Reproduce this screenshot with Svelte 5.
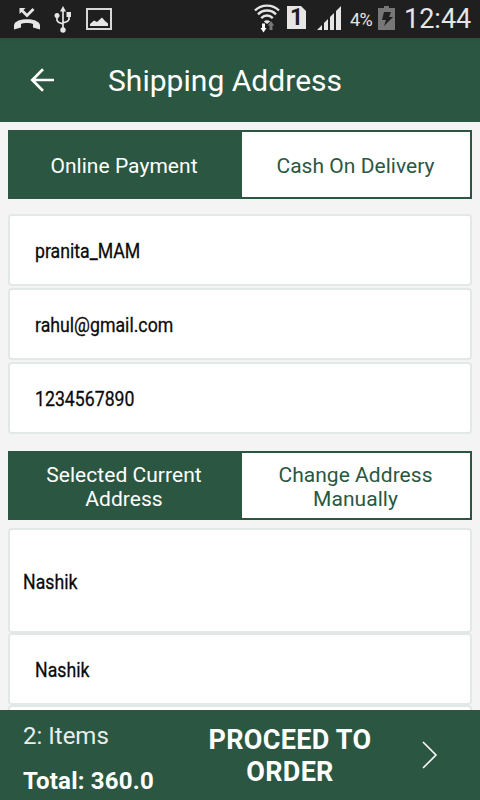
<script>
  let payment = 'online';
  let addressMode = 'current';

  const paymentTabs = [
    { id: 'online', label: 'Online Payment' },
    { id: 'cod', label: 'Cash On Delivery' }
  ];
  const addressTabs = [
    { id: 'current', label: 'Selected Current Address' },
    { id: 'manual', label: 'Change Address Manually' }
  ];

  const contact = ['pranita_MAM', 'rahul@gmail.com', '1234567890'];
</script>

<div class="screen">
  <div class="status">
    <div class="status-left">
      <svg class="missed" width="26" height="24" viewBox="0 0 26 24" fill="#e6e6e6">
        <path d="M0 22.500v-4.500C1 14 7 12.300 13 12.300s12 1.700 13 5.700v4.500l-7-2v-3.500c-3-1.300-9-1.300-12 0v3.500z" />
        <path d="M5.500 1h6l-2 2 3.500 3.500L18.500 1l2 2L13 10.500 7.500 5 5.500 7z" />
      </svg>
      <svg class="usb" width="18" height="27" viewBox="0 0 18 27" fill="none" stroke="#e6e6e6" stroke-width="1.700">
        <path d="M9 4v19M3 9.500v5l1.500 1.700L9 18M15 9v4.500l-1.500 1.700L9 17" />
        <g fill="#e6e6e6" stroke="none">
          <path d="M9 0l3 5.500H6z" />
          <circle cx="3" cy="9.500" r="2.500" />
          <path d="M12.500 6h4.500v5h-4.500z" />
          <circle cx="9" cy="24" r="2.700" />
        </g>
      </svg>
      <svg class="picture" width="26" height="22" viewBox="0 0 26 22">
        <path d="M1 1h24v20H1z" fill="none" stroke="#d8d8d8" stroke-width="2" />
        <path d="M4 18v-2l4-3.500 3 1.500 5-4.500 3 3.500 3 2.500v2.500z" fill="#e6e6e6" />
      </svg>
    </div>
    <div class="status-right">
      <svg class="wifi" width="26" height="29" viewBox="0 0 26 29" fill="none" stroke="#e6e6e6" stroke-width="2.400">
        <path d="M1 6.500C7.500 0 18.500 0 25 6.500M4 10.300c5-5 13-5 18 0M7.200 14.100c3.500-3.500 8.100-3.500 11.600 0" />
        <path d="M9.800 17.500a4.500 4.500 0 0 1 6.400 0L13 20z" fill="#e6e6e6" stroke="none" />
        <path d="M8 19.500h3v4.500h1.500l-3 4.500-3-4.500H8z" fill="#fff" stroke="none" />
        <path d="M17 17l3.200 4.500h-1.700V26h-3v-4.500h-1.700z" fill="#777" stroke="none" />
      </svg>
      <span class="sim">1</span>
      <svg class="signal" width="25" height="24" viewBox="0 0 25 24" fill="#e6e6e6">
        <path d="M0 24l5-5v5zM7 24v-7l4-4v11zM13 24V11l4-4v17zM19 24V5l5-5v24z" />
      </svg>
      <span class="percent">4%</span>
      <svg class="battery" width="17" height="24" viewBox="0 0 17 24">
        <path d="M0 2h6V0h5v2h6v22H0z" fill="#777" />
        <path d="M6 6h7l-2 5h4L6 20l2-6H4z" fill="#1f1f1f" />
      </svg>
      <span class="clock">12:44</span>
    </div>
  </div>

  <header>
    <button class="back" aria-label="Back">
      <svg width="24" height="24" viewBox="0 0 24 24" fill="none" stroke="#fff" stroke-width="2.700">
        <path d="M24 12H2M13 1.300L2.300 12 13 22.700" />
      </svg>
    </button>
    <h1>Shipping Address</h1>
  </header>

  <main>
    <div class="tabs">
      {#each paymentTabs as tab}
        <button class:active={payment === tab.id} on:click={() => (payment = tab.id)}>
          <span>{tab.label}</span>
        </button>
      {/each}
    </div>

    <div class="contact">
      {#each contact as value}
        <div class="field"><span>{value}</span></div>
      {/each}
    </div>

    <div class="tabs">
      {#each addressTabs as tab}
        <button class:active={addressMode === tab.id} on:click={() => (addressMode = tab.id)}>
          <span>{tab.label}</span>
        </button>
      {/each}
    </div>

    <div class="address">
      <div class="field tall"><span>Nashik</span></div>
      <div class="field"><span>Nashik</span></div>
      <div class="field"></div>
    </div>
  </main>

  <footer>
    <div class="summary">
      <span class="items">2: Items</span>
      <span class="total">Total: 360.0</span>
    </div>
    <button class="proceed">PROCEED TO ORDER</button>
    <svg class="next" width="16" height="28" viewBox="0 0 16 28" fill="none" stroke="#fff" stroke-width="1.600">
      <path d="M1 1l13 13L1 27" />
    </svg>
  </footer>
</div>

<style>
  :global(body) {
    margin: 0;
    overflow: hidden;
  }
  .screen {
    width: 480px;
    height: 800px;
    display: flex;
    flex-direction: column;
    overflow: hidden;
    background: #f4f4f4;
    font-family: Roboto, sans-serif;
  }
  button {
    border: none;
    margin: 0;
    padding: 0;
    background: none;
    font-family: inherit;
    cursor: pointer;
  }
  svg {
    display: block;
    flex: none;
  }

  /* Status bar */
  .status {
    flex: none;
    height: 38px;
    display: flex;
    justify-content: space-between;
    background: #1f1f1f;
    color: #e6e6e6;
  }
  .status-left,
  .status-right {
    display: flex;
    align-items: flex-start;
  }
  .status-left {
    padding-left: 14px;
  }
  .status-right {
    padding-right: 9px;
  }
  .missed {
    margin-top: 7px;
  }
  .usb {
    margin: 6px 0 0 14px;
  }
  .picture {
    margin: 8px 0 0 14px;
  }
  .wifi {
    margin-top: 4px;
  }
  .sim {
    width: 19px;
    height: 23px;
    margin: 6px 0 0 7px;
    background: #e6e6e6;
    clip-path: polygon(0 0, 14px 0, 100% 5px, 100% 100%, 0 100%);
    color: #1f1f1f;
    font-size: 23px;
    font-weight: 700;
    line-height: 24px;
    text-align: center;
  }
  .signal {
    margin: 6px 0 0 11px;
  }
  .percent {
    width: 24px;
    margin: 9px 0 0 8px;
    font-size: 18px;
    line-height: 22px;
    letter-spacing: -0.5px;
  }
  .battery {
    margin: 6px 0 0 4px;
  }
  .clock {
    width: 67px;
    margin: 3px 0 0 9px;
    font-size: 27px;
    line-height: 32px;
    white-space: nowrap;
  }

  /* Toolbar */
  header {
    flex: none;
    height: 84px;
    display: flex;
    align-items: center;
    padding-left: 30px;
    background: linear-gradient(#28513d, #2b5742 5px);
    color: #fff;
  }
  .back {
    width: 24px;
    height: 24px;
    margin-right: 54px;
  }
  h1 {
    margin: 0;
    padding-top: 2px;
    font-size: 30px;
    font-weight: 400;
    line-height: 36px;
    letter-spacing: 0.03px;
    white-space: nowrap;
  }

  main {
    flex: 1;
    min-height: 0;
    overflow: hidden;
    padding: 8px 8px 0;
  }
  .tabs {
    box-sizing: border-box;
    height: 69px;
    display: flex;
    border: 2px solid #2b5742;
    background: #fff;
  }
  .tabs button {
    flex: 0 0 228px;
    padding: 2px 25px 0 24px;
    color: #2b5742;
    font-size: 21px;
    line-height: 24px;
    letter-spacing: 0.04px;
  }
  .tabs button.active {
    flex: 0 0 232px;
    padding-left: 20px;
    padding-right: 24px;
    background: #2b5742;
    color: #fff;
  }

  .contact {
    display: flex;
    flex-direction: column;
    gap: 2px;
    margin: 15px 0 17px;
  }
  .address {
    margin-top: 8px;
  }
  .field {
    box-sizing: border-box;
    height: 72px;
    display: flex;
    align-items: center;
    padding: 1px 25px 0;
    border: 2px solid #e2e8e6;
    border-radius: 4px;
    background: #fff;
    color: #0a0a0a;
    font-size: 21px;
  }
  /* narrow lettering for the values */
  .field span {
    transform: scaleX(0.843);
    transform-origin: left;
    -webkit-text-stroke: 0.3px;
  }
  .field.tall {
    height: 105px;
    padding-top: 2px;
    padding-left: 13px;
  }

  /* Order bar */
  footer {
    flex: none;
    height: 90px;
    display: flex;
    align-items: flex-start;
    background: #2b5742;
    color: #fff;
  }
  .summary {
    width: 182px;
    padding-left: 23px;
    display: flex;
    flex-direction: column;
    gap: 17px;
    font-size: 24px;
    line-height: 28px;
    padding-top: 12px;
  }
  .items {
    color: #e8eeeb;
  }
  .total {
    font-weight: 700;
    letter-spacing: 0.2px;
  }
  .proceed {
    width: 170px;
    padding-top: 14px;
    color: #fff;
    font-size: 27px;
    font-weight: 700;
    line-height: 32px;
    letter-spacing: 0.3px;
  }
  .next {
    margin: 31px 0 0 47px;
  }
</style>
